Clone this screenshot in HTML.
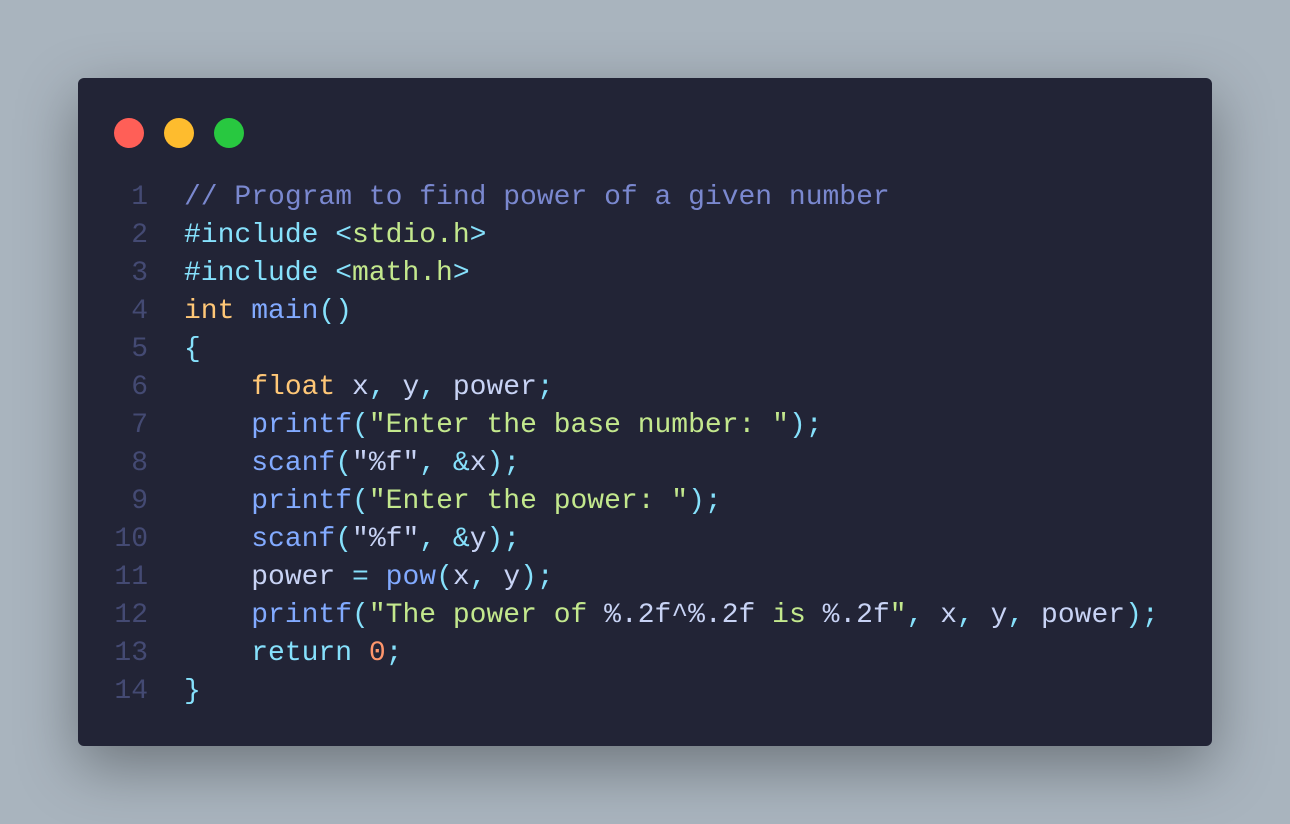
<!DOCTYPE html>
<html><head><style>
html,body{margin:0;padding:0}
body{width:1290px;height:824px;background:#a9b4be;position:relative;overflow:hidden;font-family:"Liberation Mono",monospace}
.win{position:absolute;left:78px;top:78px;width:1134px;height:668px;background:#222436;border-radius:6px;box-shadow:0 20px 60px rgba(0,0,0,.35)}
.dot{position:absolute;top:40px;width:30px;height:30px;border-radius:50%}
pre{margin:0;position:absolute;left:36px;top:101px;font-size:28px;line-height:38px;color:#c8d3f5;font-family:"Liberation Mono",monospace}
.n{color:#444a73;display:inline-block;width:34px;text-align:right;margin-right:36px}
.c{color:#7a88cf}.k{color:#86e1fc}.s{color:#c3e88d}.t{color:#ffc777}.f{color:#82aaff}.o{color:#ff966c}
</style></head><body>
<div class="win">
<div class="dot" style="left:36px;background:#ff5f57"></div>
<div class="dot" style="left:86px;background:#febc2e"></div>
<div class="dot" style="left:136px;background:#28c840"></div>
<pre><span class="n">1</span><span class="c">// Program to find power of a given number</span>
<span class="n">2</span><span class="k">#include</span> <span class="k">&lt;</span><span class="s">stdio.h</span><span class="k">&gt;</span>
<span class="n">3</span><span class="k">#include</span> <span class="k">&lt;</span><span class="s">math.h</span><span class="k">&gt;</span>
<span class="n">4</span><span class="t">int</span> <span class="f">main</span><span class="k">()</span>
<span class="n">5</span><span class="k">{</span>
<span class="n">6</span>    <span class="t">float</span> x<span class="k">,</span> y<span class="k">,</span> power<span class="k">;</span>
<span class="n">7</span>    <span class="f">printf</span><span class="k">(</span><span class="s">"Enter the base number: "</span><span class="k">);</span>
<span class="n">8</span>    <span class="f">scanf</span><span class="k">(</span>"%f"<span class="k">,</span> <span class="k">&amp;</span>x<span class="k">);</span>
<span class="n">9</span>    <span class="f">printf</span><span class="k">(</span><span class="s">"Enter the power: "</span><span class="k">);</span>
<span class="n">10</span>    <span class="f">scanf</span><span class="k">(</span>"%f"<span class="k">,</span> <span class="k">&amp;</span>y<span class="k">);</span>
<span class="n">11</span>    power <span class="k">=</span> <span class="f">pow</span><span class="k">(</span>x<span class="k">,</span> y<span class="k">);</span>
<span class="n">12</span>    <span class="f">printf</span><span class="k">(</span><span class="s">"The power of </span>%.2f^%.2f<span class="s"> is </span>%.2f<span class="s">"</span><span class="k">,</span> x<span class="k">,</span> y<span class="k">,</span> power<span class="k">);</span>
<span class="n">13</span>    <span class="k">return</span> <span class="o">0</span><span class="k">;</span>
<span class="n">14</span><span class="k">}</span></pre>
</div>
</body></html>
